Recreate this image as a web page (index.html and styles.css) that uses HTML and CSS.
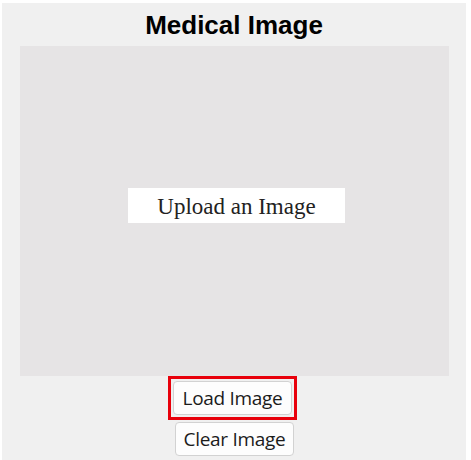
FILE: index.html
```html
<!DOCTYPE html>
<html lang="en">
<head>
    <meta charset="UTF-8">
    <title>Medical Image</title>
    <link rel="stylesheet" href="styles.css">
</head>
<body>
    <div class="panel">
        <h1 class="title">Medical Image</h1>
        <div class="canvas">
            <div class="placeholder">Upload an Image</div>
        </div>
        <div class="buttons">
            <div class="focus-ring">
                <button class="btn">Load Image</button>
            </div>
            <button class="btn">Clear Image</button>
        </div>
    </div>
</body>
</html>
```

FILE: styles.css
```css
body {
    margin: 0;
    background: #ffffff;
}
.panel {
    margin: 3px 5px 0 2px;
    height: 457px;
    background: #f0f0f0;
    display: flex;
    flex-direction: column;
    align-items: center;
}
.title {
    margin: 0;
    height: 43px;
    line-height: 44px;
    font-family: "Liberation Sans", Arial, sans-serif;
    font-weight: bold;
    font-size: 26px;
    color: #000;
}
.canvas {
    width: 429px;
    height: 330px;
    margin-left: 1px;
    background: #e6e4e5;
    display: flex;
    align-items: center;
    justify-content: center;
}
.placeholder {
    width: 217px;
    height: 35px;
    margin: 0 0 11px 4px;
    background: #ffffff;
    font-family: "Liberation Serif", "Times New Roman", serif;
    font-size: 23px;
    line-height: 37px;
    text-align: center;
    color: #222;
}
.buttons {
    display: flex;
    flex-direction: column;
    align-items: center;
    gap: 2px;
    margin-left: 1px;
}
.focus-ring {
    border: 3px solid #e8000b;
    padding: 2px;
    margin-right: 4px;
}
.btn {
    width: 119px;
    height: 34px;
    padding: 0;
    background: #fdfdfd;
    border: 1px solid #d2d2d2;
    border-radius: 4px;
    font-family: "Open Sans", "Noto Sans", sans-serif;
    font-size: 19px;
    letter-spacing: -0.3px;
    color: #1b1b1b;
}
```
